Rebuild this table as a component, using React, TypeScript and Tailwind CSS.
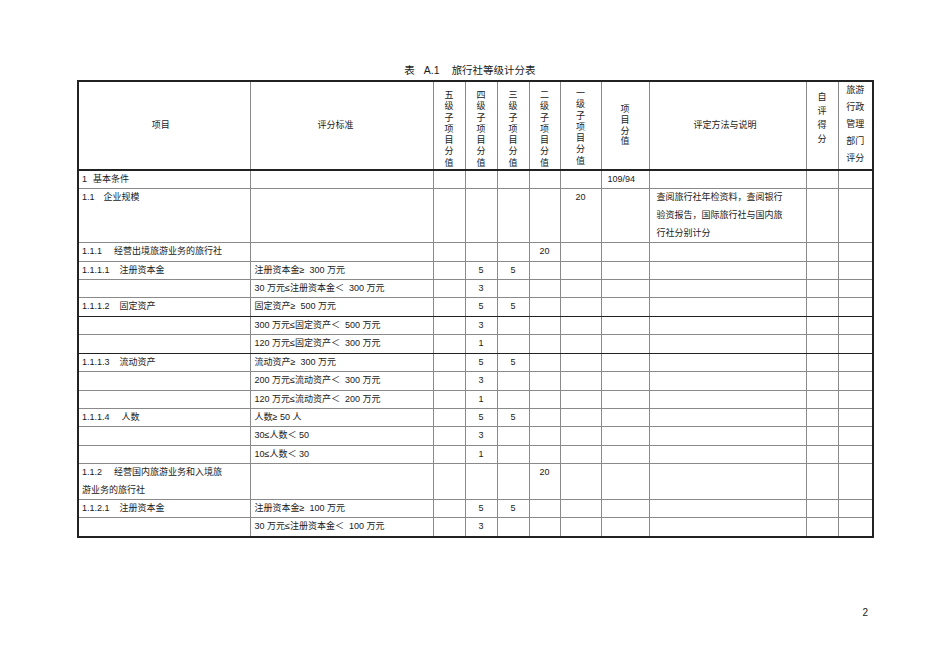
import type { ReactNode } from 'react'

const FONT = "font-['Liberation_Sans','Noto_Sans_CJK_SC',sans-serif]"

type Row = {
  item?: ReactNode
  std?: string
  vals?: (string | undefined)[] // 五 四 三 二 一 项目分值
  method?: ReactNode
  h: string
  darkBottom?: boolean
}

function Label({ n, t, gap }: { n: string; t: ReactNode; gap: string }) {
  return (
    <>
      {n}
      <span className={gap}>{t}</span>
    </>
  )
}

const rows: Row[] = [
  { item: <Label n="1" t="基本条件" gap="ml-[6px]" />, vals: [, , , , , '109/94'], h: 'h-[16px]' },
  {
    item: <Label n="1.1" t="企业规模" gap="ml-[9px]" />,
    vals: [, , , , '20'],
    method: (
      <>
        查阅旅行社年检资料，查阅银行
        <br />
        验资报告，国际旅行社与国内旅
        <br />
        行社分别计分
      </>
    ),
    h: 'h-[53.3px]',
  },
  { item: <Label n="1.1.1" t="经营出境旅游业务的旅行社" gap="ml-[12px]" />, vals: [, , , '20'], h: 'h-[17.4px]' },
  { item: <Label n="1.1.1.1" t="注册资本金" gap="ml-[10px]" />, std: '注册资本金≥  300 万元', vals: [, '5', '5'], h: 'h-[17.4px]' },
  { std: '30 万元≤注册资本金＜  300 万元', vals: [, '3'], h: 'h-[17.4px]' },
  { item: <Label n="1.1.1.2" t="固定资产" gap="ml-[10px]" />, std: '固定资产≥  500 万元', vals: [, '5', '5'], h: 'h-[17.4px]', darkBottom: true },
  { std: '300 万元≤固定资产＜  500 万元', vals: [, '3'], h: 'h-[17.4px]' },
  { std: '120 万元≤固定资产＜  300 万元', vals: [, '1'], h: 'h-[17.4px]', darkBottom: true },
  { item: <Label n="1.1.1.3" t="流动资产" gap="ml-[10px]" />, std: '流动资产≥  300 万元', vals: [, '5', '5'], h: 'h-[17.4px]' },
  { std: '200 万元≤流动资产＜  300 万元', vals: [, '3'], h: 'h-[17.4px]' },
  { std: '120 万元≤流动资产＜  200 万元', vals: [, '1'], h: 'h-[17.4px]' },
  { item: <Label n="1.1.1.4" t="人数" gap="ml-[12px]" />, std: '人数≥ 50 人', vals: [, '5', '5'], h: 'h-[17.4px]' },
  { std: '30≤人数＜ 50', vals: [, '3'], h: 'h-[17.4px]' },
  { std: '10≤人数＜ 30', vals: [, '1'], h: 'h-[17.4px]' },
  {
    item: (
      <>
        <Label n="1.1.2" t="经营国内旅游业务和入境旅" gap="ml-[12px]" />
        <br />
        游业务的旅行社
      </>
    ),
    vals: [, , , '20'],
    h: 'h-[35.8px]',
  },
  { item: <Label n="1.1.2.1" t="注册资本金" gap="ml-[10px]" />, std: '注册资本金≥  100 万元', vals: [, '5', '5'], h: 'h-[17.4px]' },
  { std: '30 万元≤注册资本金＜  100 万元', vals: [, '3'], h: 'h-[17.4px]' },
]

function Stack({ text, lead, pt }: { text: string; lead: string; pt: string }) {
  return (
    <div className={`flex flex-col items-center ${lead} ${pt}`}>
      {text.split('').map((c, i) => (
        <span key={i}>{c}</span>
      ))}
    </div>
  )
}

const cell = 'border border-[#8a8a8a] p-0 align-top'
const head = 'border border-[#8a8a8a] border-b-2 border-b-[#222] p-0'

export default function App() {
  return (
    <div className={`w-[950px] h-[672px] bg-white pl-[77px] pt-[62px] flex flex-col text-[#1a1a1a] ${FONT}`}>
      <div className="w-[795px] text-center text-[10.5px] leading-[16px] pr-[9px] whitespace-pre">
        表<span className="ml-[9px]">A.1</span>
        <span className="ml-[12px]">旅行社等级计分表</span>
      </div>

      <table className="mt-[2px] w-[795px] table-fixed border-collapse border-2 border-[#222] text-[9px]">
        <colgroup>
          <col className="w-[172px]" />
          <col className="w-[183px]" />
          <col className="w-[32px]" />
          <col className="w-[32px]" />
          <col className="w-[32px]" />
          <col className="w-[31px]" />
          <col className="w-[41px]" />
          <col className="w-[48px]" />
          <col className="w-[157px]" />
          <col className="w-[32px]" />
          <col className="w-[35px]" />
        </colgroup>
        <thead>
          <tr className="h-[88px]">
            <th className={`${head} align-middle font-normal pr-[7px]`}>项目</th>
            <th className={`${head} align-middle font-normal pr-[12px]`}>评分标准</th>
            <th className={`${head} align-top font-normal`}>
              <Stack text="五级子项目分值" lead="leading-[11.3px]" pt="pt-[8px]" />
            </th>
            <th className={`${head} align-top font-normal`}>
              <Stack text="四级子项目分值" lead="leading-[11.3px]" pt="pt-[8px]" />
            </th>
            <th className={`${head} align-top font-normal`}>
              <Stack text="三级子项目分值" lead="leading-[11.3px]" pt="pt-[8px]" />
            </th>
            <th className={`${head} align-top font-normal`}>
              <Stack text="二级子项目分值" lead="leading-[11.3px]" pt="pt-[8px]" />
            </th>
            <th className={`${head} align-top font-normal`}>
              <Stack text="一级子项目分值" lead="leading-[11.3px]" pt="pt-[6px]" />
            </th>
            <th className={`${head} align-middle font-normal`}>
              <Stack text="项目分值" lead="leading-[10.6px]" pt="pt-0" />
            </th>
            <th className={`${head} align-middle font-normal pr-[5px]`}>评定方法与说明</th>
            <th className={`${head} align-top font-normal`}>
              <Stack text="自评得分" lead="leading-[14px]" pt="pt-[8px]" />
            </th>
            <th className={`${head} align-top font-normal leading-[17.1px] text-center`}>
              旅游
              <br />
              行政
              <br />
              管理
              <br />
              部门
              <br />
              评分
            </th>
          </tr>
        </thead>
        <tbody>
          {rows.map((r, i) => {
            const c = r.darkBottom ? `${cell} border-b-[#222]` : cell
            const v = r.vals ?? []
            return (
              <tr key={i} className={r.h}>
                <td className={c}>
                  <div className="pl-[3px] leading-[17.4px] whitespace-nowrap">{r.item}</div>
                </td>
                <td className={c}>
                  <div className="pl-[4px] leading-[17.4px] whitespace-pre">{r.std}</div>
                </td>
                {[0, 1, 2, 3, 4].map((k) => (
                  <td key={k} className={c}>
                    <div className="text-center leading-[17.4px]">{v[k]}</div>
                  </td>
                ))}
                <td className={c}>
                  <div className="pl-[6px] leading-[17.4px]">{v[5]}</div>
                </td>
                <td className={c}>
                  <div className="pl-[7px] leading-[17.6px] whitespace-nowrap">{r.method}</div>
                </td>
                <td className={c} />
                <td className={c} />
              </tr>
            )
          })}
        </tbody>
      </table>

      <div className="mt-[68px] w-[795px] text-right text-[10px] leading-[14px] pr-[4px]">2</div>
    </div>
  )
}
